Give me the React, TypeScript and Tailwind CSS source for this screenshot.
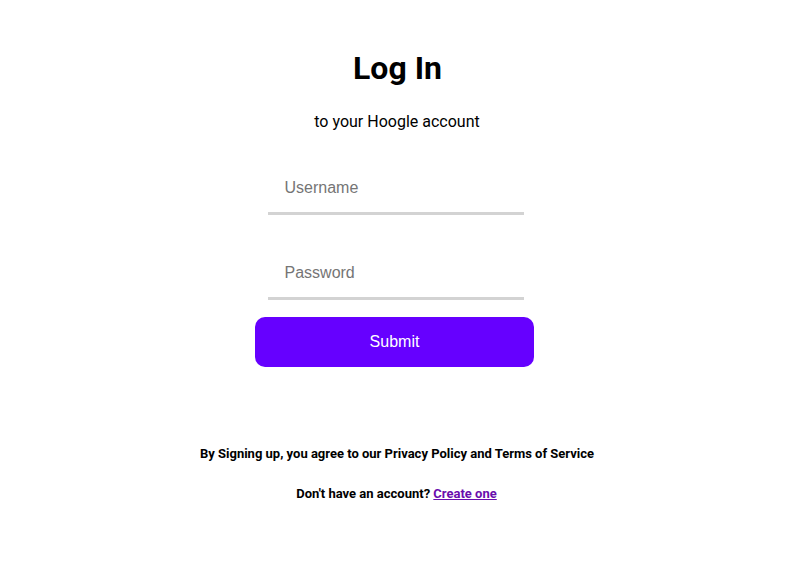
export default function App() {
  return (
    <div className="min-h-screen bg-white flex flex-col items-center pt-[50px] font-['Roboto',sans-serif] text-black">
      <h1 className="text-[32px] font-bold leading-[37px]">Log In</h1>
      <p className="mt-[25px] text-[16px] leading-[19px] mr-[1px]">to your Hoogle account</p>

      <form className="mt-[29px] flex flex-col items-center" onSubmit={(e) => e.preventDefault()}>
        <input
          type="text"
          placeholder="Username"
          className="mr-[4px] w-[256px] h-[55px] pt-[4px] px-[17px] border-b-[3px] border-[#d3d3d3] outline-none text-[16px] font-['Liberation_Sans',sans-serif] placeholder:text-[#757575]"
        />
        <input
          type="password"
          placeholder="Password"
          className="mr-[4px] mt-[30px] w-[256px] h-[55px] pt-[4px] px-[17px] border-b-[3px] border-[#d3d3d3] outline-none text-[16px] font-['Liberation_Sans',sans-serif] placeholder:text-[#757575]"
        />
        <button
          type="submit"
          className="mr-[6px] mt-[17px] w-[279px] h-[50px] rounded-[10px] bg-[#6600ff] text-white text-[16px] font-['Liberation_Sans',sans-serif]"
        >
          Submit
        </button>
      </form>

      <p className="mt-[79px] text-[13px] font-bold leading-[15px] mr-[1px]">
        By Signing up, you agree to our Privacy Policy and Terms of Service
      </p>
      <p className="mt-[25px] text-[13px] font-bold leading-[15px] mr-[2px]">
        Don't have an account?{' '}
        <a href="#" className="text-[#6a0dad] underline">
          Create one
        </a>
      </p>
    </div>
  );
}
